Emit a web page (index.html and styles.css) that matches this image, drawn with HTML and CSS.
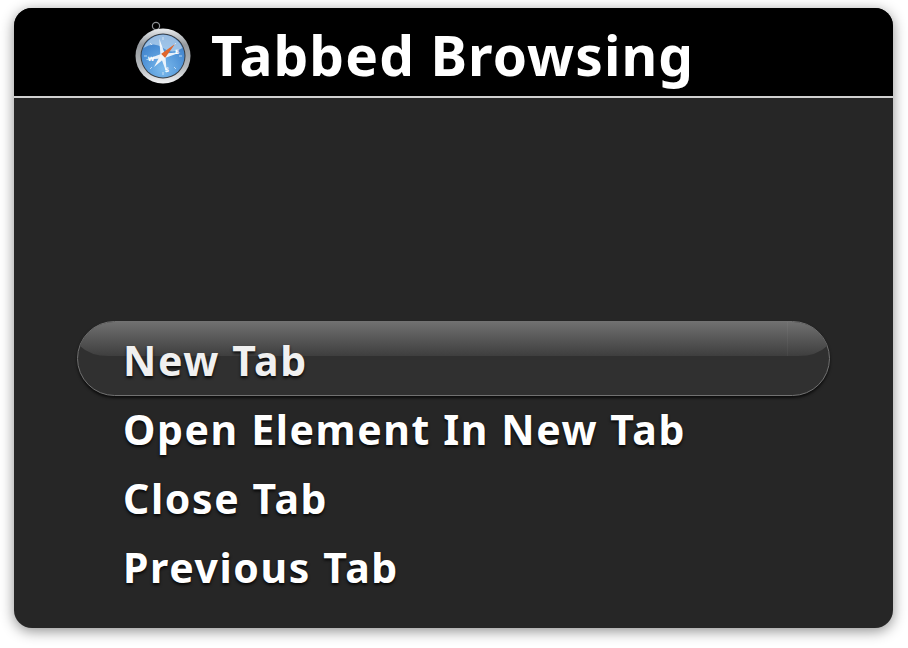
FILE: index.html
```html
<!DOCTYPE html>
<html lang="en">
<head>
	<meta charset="UTF-8">
	<title>Tabbed Browsing</title>
	<link rel="stylesheet" href="styles.css">
</head>
<body class="body">
	<main class="panel">
		<header class="panel__header">
			<svg class="compass" viewBox="0 0 64 70" width="64" height="70" aria-hidden="true">
				<defs>
					<linearGradient id="rim" x1="0" y1="0" x2="0" y2="1">
						<stop offset="0" stop-color="#eceef0"/>
						<stop offset="0.3" stop-color="#94999e"/>
						<stop offset="0.7" stop-color="#b6babe"/>
						<stop offset="1" stop-color="#f2f3f5"/>
					</linearGradient>
					<radialGradient id="dial" cx="0.5" cy="0.8" r="0.85">
						<stop offset="0" stop-color="#7dbbec"/>
						<stop offset="0.6" stop-color="#4c90d6"/>
						<stop offset="1" stop-color="#3a76bd"/>
					</radialGradient>
				</defs>
				<circle cx="25" cy="8" r="3.6" fill="none" stroke="#8c9094" stroke-width="1.2"/>
				<circle cx="32" cy="38" r="27.5" fill="url(#rim)"/>
				<circle cx="32" cy="38" r="22.5" fill="#3a3e43"/>
				<circle cx="32" cy="38" r="21.5" fill="url(#dial)"/>
				<path d="M12.500 30A21 21 0 0 1 51.500 30Q41 37 32 30T12.500 30Z" fill="#d6e8f7" opacity=".6"/>
				<g stroke="#e9f3fb" stroke-width="1" opacity=".7">
					<path d="M32 19v3M32 54v3M13 38h3M48 38h3M19 25l2 2M45 25l-2 2M19 51l2-2M45 51l-2-2"/>
				</g>
				<g transform="rotate(-12 32 38)">
					<path d="M32 20l2.200 15.800 15.800 2.200-15.800 2.200-2.200 15.800-2.200-15.800-15.800-2.200 15.800-2.200Z" fill="#fff" opacity=".85"/>
				</g>
				<path d="M44 26L34 40 30 36Z" fill="#e0662c"/>
				<path d="M23 49L30 36 34 40Z" fill="#f4f6f8"/>
				<g fill="#fff" font-family="DejaVu Sans" font-size="6" font-weight="700" text-anchor="middle">
					<text x="20" y="43">W</text>
					<text x="46" y="36">E</text>
					<text x="36" y="54">S</text>
				</g>
			</svg>
			<h1 class="panel__title">Tabbed Browsing</h1>
		</header>
		<ul class="menu">
			<li class="menu__item menu__item--selected"><span class="menu__text">New Tab</span></li>
			<li class="menu__item"><span class="menu__text">Open Element In New Tab</span></li>
			<li class="menu__item"><span class="menu__text">Close Tab</span></li>
			<li class="menu__item"><span class="menu__text">Previous Tab</span></li>
		</ul>
	</main>
</body>
</html>
```

FILE: styles.css
```css
:root {
	--panel-colour: #262626;
	--text-colour: #fff;
}

*,
*::before,
*::after {
	box-sizing: border-box;
}

.body {
	margin: 0;
	width: 908px;
	height: 648px;
	padding: 8px 15px 20px 14px;
	overflow: hidden;
	background-color: #fff;
	font-family: "Noto Sans", sans-serif;
	font-weight: 700;
	color: var(--text-colour);
}

.panel {
	display: flex;
	flex-direction: column;
	height: 100%;
	overflow: hidden;
	background-color: var(--panel-colour);
	border-radius: 18px;
	box-shadow: 0 3px 14px rgba(0, 0, 0, 0.45);
}

.panel__header {
	display: flex;
	align-items: center;
	flex: none;
	height: 90px;
	padding-left: 117px;
	gap: 16px;
	background-color: #000;
	border-bottom: 2px solid #d0d0d0;
}

.compass {
	flex: none;
	margin-top: 2px;
}

.panel__title {
	margin: 4px 0 0;
	font-size: 55px;
	font-weight: 700;
	letter-spacing: 1.1px;
	line-height: 1;
}

.menu {
	display: flex;
	flex-direction: column;
	margin: auto 63px 28px 63px;
	padding: 0;
	list-style: none;
}

.menu__item {
	position: relative;
	display: flex;
	align-items: center;
	height: 69px;
	padding: 2px 0 0 46px;
	font-size: 41px;
	letter-spacing: 1.6px;
	text-shadow: 0 2px 3px rgba(0, 0, 0, 0.85);
}

.menu__text {
	position: relative;
	z-index: 1;
}

.menu__item--selected::before {
	content: "";
	position: absolute;
	inset: -3px 0;
	background-color: #303030;
	border: 1px solid #727272;
	border-radius: 38px;
	box-shadow: 0 2px 3px rgba(0, 0, 0, 0.7);
}

.menu__item--selected::after {
	content: "";
	position: absolute;
	top: -2px;
	left: 1px;
	width: 751px;
	height: 34px;
	background-image:
		linear-gradient(90deg, transparent 709px, rgba(255, 255, 255, 0.04) 709px 710px, transparent 710px),
		linear-gradient(#707070, #3e3e3e);
	clip-path: path("M2 24A36 36 0 0 1 36 0H715A36 36 0 0 1 749 24Q739 34 720 34H31Q12 34 2 24Z");
}

.menu__item--selected .menu__text {
	color: #f0f0f0;
}
```
